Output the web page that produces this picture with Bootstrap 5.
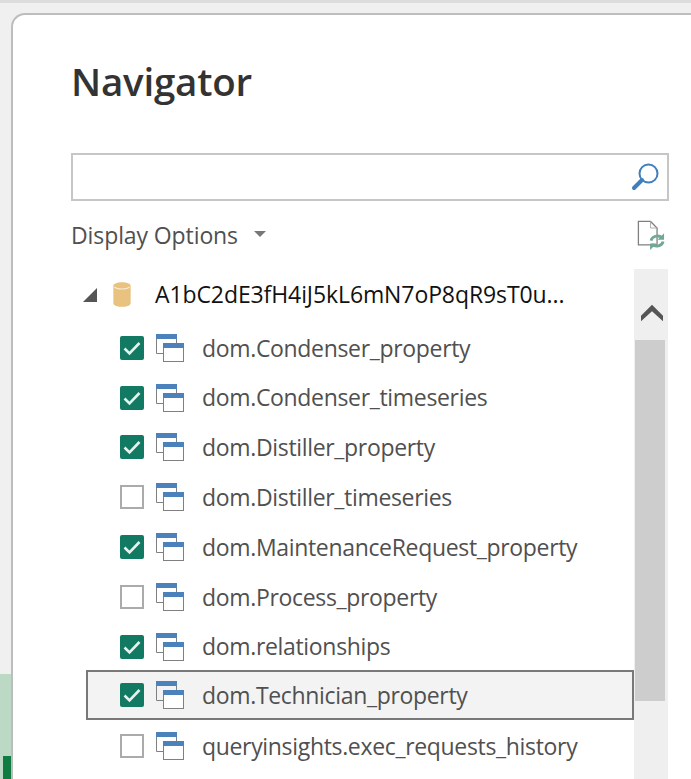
<!DOCTYPE html>
<html lang="en">
<head>
  <meta charset="UTF-8">
  <title>Navigator</title>
  <meta name="viewport" content="width=device-width, initial-scale=1.0">
  <link href="https://cdn.jsdelivr.net/npm/bootstrap@5.3.0/dist/css/bootstrap.min.css" rel="stylesheet">
  <style>
    html, body { height: 779px; overflow: hidden; }
    body { background: #f0f0f0; font-family: "Open Sans", "Noto Sans", sans-serif; color: #444; }
    .shell { height: 779px; border-top: 3px solid #dcdcdc; }
    .side-strip { width: 11px; flex: none; padding-top: 10px; }
    .side-grey { height: 661px; }
    .side-green { height: 105px; background: #bcd9c6; padding: 82px 0 0 3px; }
    .side-green-dark { height: 23px; background: #107c41; }
    .dialog { flex: 1; margin-top: 10px; background: #fff; border-top: 2px solid #bdbdbd; border-left: 2px solid #bdbdbd; border-top-left-radius: 14px; overflow: hidden; padding: 0 22px 0 58px; }
    .nav-title { font-size: 38.500px; font-weight: 600; color: #333; line-height: 48px; margin: 42px 0 0 0; letter-spacing: -.2px; }
    .search-box { height: 48px; margin-top: 48px; border: 2px solid #c6c6c6; padding-right: 6px; }
    .options-row { height: 68px; }
    .options-label { font-size: 23px; color: #505050; letter-spacing: -.1px; }
    .caret-down { width: 0; height: 0; border-left: 6px solid transparent; border-right: 6px solid transparent; border-top: 6px solid #777; margin-left: 16px; margin-top: -3px; }
    .tree-list { width: 563px; }
    .db-row { height: 54px; padding: 0 0 4px 12px; }
    .db-arrow { width: 0; height: 0; border-left: 14px solid transparent; border-bottom: 14px solid #555; margin-top: 2px; }
    .db-label { font-size: 23px; color: #111; margin-left: 24px; letter-spacing: -.1px; }
    .item-row { height: 49.800px; padding-left: 32px; border: 2px solid transparent; margin-left: 15px; }
    .item-row.picked { background: #f3f3f3; border-color: #787878; margin-top: -1.500px; margin-bottom: 1.500px; }
    .tick-box { width: 24px; height: 24px; flex: none; border-radius: 2px; background: #127a63; }
    .tick-box.off { background: #fff; border: 2px solid #ababab; border-radius: 0; }
    .item-icon { margin-left: 12px; margin-top: 1px; flex: none; }
    .item-label { font-size: 23px; color: #505050; margin-left: 17px; white-space: nowrap; letter-spacing: -.33px; }
    .scroll-track { width: 34px; flex: none; background: #efefef; height: 510px; }
    .scroll-up { height: 71px; padding: 35px 0 0 2px; }
    .scroll-thumb { height: 361px; background: #cdcdcd; margin: 0 3px 0 1px; }
  </style>
</head>
<body>
  <div class="shell d-flex">
    <div class="side-strip">
      <div class="side-grey"></div>
      <div class="side-green"><div class="side-green-dark"></div></div>
    </div>
    <div class="dialog">
      <h1 class="nav-title">Navigator</h1>
      <div class="search-box d-flex align-items-center justify-content-end">
        <svg width="30" height="30" viewBox="0 0 30 30" fill="none" stroke="#3f7fbd">
          <circle cx="17.500" cy="11.500" r="9" stroke-width="2"/>
          <path d="M11 18 3 26" stroke-width="4" stroke-linecap="round"/>
        </svg>
      </div>
      <div class="options-row d-flex align-items-center">
        <span class="options-label">Display Options</span>
        <span class="caret-down"></span>
        <svg class="ms-auto me-1" width="28" height="32" viewBox="0 0 30 34">
          <path d="M1.500 2.500h13l7 7v18h-20z" fill="#fff" stroke="#808080" stroke-width="1.400"/>
          <path d="M14.500 2.500v7h7" fill="none" stroke="#aaa" stroke-width="1"/>
          <g fill="none" stroke="#6fa897" stroke-width="3">
            <path d="M15 23a7 6 0 0 1 12-3"/>
            <path d="M28 24a7 6 0 0 1-12 3"/>
          </g>
          <path d="M29 15v7h-7zM14 33v-7h7z" fill="#6fa897"/>
        </svg>
      </div>
      <div class="d-flex">
        <div class="tree-list">
          <div class="db-row d-flex align-items-center">
            <span class="db-arrow"></span>
            <svg class="ms-3" width="18" height="25" viewBox="0 0 18 26">
              <path d="M0 4c0-5 18-5 18 0v18c0 5-18 5-18 0z" fill="#e8c27e"/>
              <path d="M1 5c3 3 13 3 16 0" fill="none" stroke="#f8ecd4" stroke-width="1.200"/>
            </svg>
            <span class="db-label">A1bC2dE3fH4iJ5kL6mN7oP8qR9sT0u...</span>
          </div>
          <div id="itemList"></div>
        </div>
        <div class="scroll-track">
          <div class="scroll-up d-flex justify-content-center">
            <svg width="22" height="18" viewBox="0 0 24 18"><path d="M0 12 12 0l12 12v6L12 7 0 18z" fill="#555"/></svg>
          </div>
          <div class="scroll-thumb"></div>
        </div>
      </div>
    </div>
  </div>

  <script src="https://cdn.jsdelivr.net/npm/bootstrap@5.3.0/dist/js/bootstrap.bundle.min.js"></script>
  <script>
    // table rows: name, ticked, selected
    const tables = [
      ["dom.Condenser_property", true],
      ["dom.Condenser_timeseries", true],
      ["dom.Distiller_property", true],
      ["dom.Distiller_timeseries", false],
      ["dom.MaintenanceRequest_property", true],
      ["dom.Process_property", false],
      ["dom.relationships", true],
      ["dom.Technician_property", true, true],
      ["queryinsights.exec_requests_history", false]
    ];

    const tickSvg = `<svg width="24" height="24" viewBox="0 0 24 24" class="d-block"><path d="M4.500 12.500l5 5 10-10.500" fill="none" stroke="#e6f2ee" stroke-width="2.600"/></svg>`;
    const windowSvg = `<svg class="item-icon" width="29" height="29" viewBox="0 0 29 29">
      <path d="M.5 5v14.500h7" fill="none" stroke="#808080"/><path d="M20.500 5v4" stroke="#808080"/>
      <rect width="21" height="5" fill="#4c82bb"/>
      <rect x="7.500" y="9.500" width="20" height="18" fill="#fff" stroke="#808080"/>
      <rect x="7" y="9" width="21" height="5" fill="#4c82bb"/></svg>`;

    document.getElementById("itemList").innerHTML = tables.map(([name, on, picked]) => `
      <div class="item-row d-flex align-items-center${picked ? " picked" : ""}">
        <span class="tick-box${on ? "" : " off"}">${on ? tickSvg : ""}</span>
        ${windowSvg}
        <span class="item-label">${name}</span>
      </div>`).join("");
  </script>
</body>
</html>
